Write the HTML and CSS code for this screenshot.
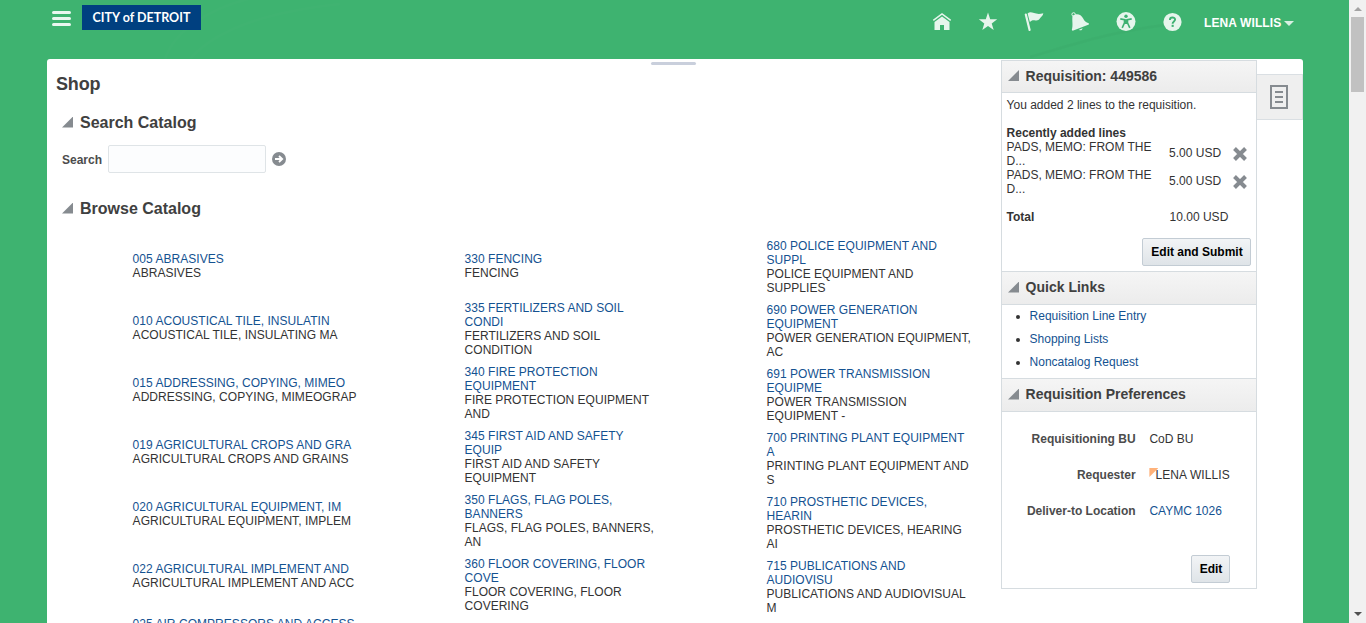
FILE: index.html
```html
<!DOCTYPE html>
<html lang="en">
<head>
<meta charset="utf-8">
<title>Shop</title>
<link rel="stylesheet" href="styles.css">
</head>
<body>
<div class="window">
  <div class="page">
    <svg class="swirl" width="1349" height="59" viewBox="0 0 1349 59" fill="none" stroke-width="3">
      <path d="M165 59C175 30 210 5 270-6M190 59C215 30 265 12 340 4" stroke="#fff" stroke-opacity=".012"/>
      <path d="M1030 57C1075 44 1110 32 1165 25" stroke="#000" stroke-opacity=".02"/>
    </svg>
    <header class="topbar">
      <svg class="burger" width="19" height="15" viewBox="0 0 19 15"><path d="M1.5 1.5h16M1.5 7.5h16M1.5 13.5h16" stroke="#e9f7ef" stroke-width="3" stroke-linecap="round"/></svg>
      <div class="logo">CITY of DETROIT</div>
      <nav class="tools">
        <svg width="20" height="20" viewBox="0 0 20 20"><path d="M1.300 10.300L10 3.900l8.700 6.400" fill="none" stroke="#e6f5ec" stroke-width="1.500"/><path d="M2.500 12L10 6.400l7.500 5.600V20h-5.500v-5h-4v5H2.500z" fill="#e6f5ec"/></svg>
        <svg width="20" height="20" viewBox="0 0 20 20"><path d="M10 2.500l2.200 6.700h7l-5.500 4.200 2 6.700-5.700-4-5.700 4 2-6.700-5.500-4.200h7z" fill="#e6f5ec"/></svg>
        <svg width="20" height="20" viewBox="0 0 20 20"><path d="M1.800 4.500L5.600 19.900" stroke="#e6f5ec" stroke-width="2.200" stroke-linecap="round"/><path d="M3.600 3.500c4-3.500 7 2.300 15.700-.3-.4 2.600-2 3.300-3.100 4.800-1.500 2.200-2.600 2.600-4.700 2.400-2.600-.3-4.200-.2-5.600 1.800z" fill="#e6f5ec"/></svg>
        <svg width="20" height="20" viewBox="0 0 20 20"><circle cx="3.600" cy="4.400" r="1.700" fill="none" stroke="#e6f5ec"/><path d="M2.500 6C6 3 11 4 13.200 8.500c1.200 2.600 2.600 4 5.600 4.800l.1 1.200L2.700 20.800l-.9-.8C3.300 15 1.800 11 2.500 6z" fill="#e6f5ec"/><path d="M9 19.800a2.200 2.200 0 0 0 3.600-1.500z" fill="#e6f5ec"/></svg>
        <svg width="20" height="20" viewBox="0 0 20 20"><circle cx="10" cy="11.600" r="9.500" fill="#e6f5ec"/><circle cx="10" cy="6.200" r="1.700" fill="#3eb172"/><path d="M4.300 8.900l4.200.8v3.100l-2.300 5M15.700 8.900l-4.200.8v3.100l2.300 5" fill="none" stroke="#3eb172" stroke-width="1.600"/><path d="M8 9.200h4v4.800H8z" fill="#3eb172"/></svg>
        <svg width="20" height="20" viewBox="0 0 20 20"><circle cx="10.500" cy="12" r="9.100" fill="#e6f5ec"/><path d="M7.900 9.900c0-3.200 5.200-3 5.200-.3 0 1.900-2.500 1.900-2.500 4.100" fill="none" stroke="#3eb172" stroke-width="1.900"/><path d="M9.600 14.800h2.100v2.100H9.600z" fill="#3eb172"/></svg>
      </nav>
      <div class="user">LENA WILLIS<span class="caret"></span></div>
    </header>

    <div class="panel">
      <div class="grip"></div>
      <main class="content">
        <h1>Shop</h1>
        <h2><i class="tri"></i>Search Catalog</h2>
        <div class="search">
          <label for="q">Search</label>
          <input id="q" type="text">
          <svg width="14" height="14" viewBox="0 0 14 14"><circle cx="7" cy="7" r="7" fill="#868b90"/><path d="M3 7h6M7 4l3.200 3L7 10" fill="none" stroke="#fff" stroke-width="1.800"/></svg>
        </div>
        <h2 class="browse"><i class="tri"></i>Browse Catalog</h2>
        <div class="catalog">
          <div class="col col-a">
            <p><a>005 ABRASIVES</a>ABRASIVES</p>
            <p><a>010 ACOUSTICAL TILE, INSULATIN</a>ACOUSTICAL TILE, INSULATING MA</p>
            <p><a>015 ADDRESSING, COPYING, MIMEO</a>ADDRESSING, COPYING, MIMEOGRAP</p>
            <p><a>019 AGRICULTURAL CROPS AND GRA</a>AGRICULTURAL CROPS AND GRAINS</p>
            <p><a>020 AGRICULTURAL EQUIPMENT, IM</a>AGRICULTURAL EQUIPMENT, IMPLEM</p>
            <p><a>022 AGRICULTURAL IMPLEMENT AND</a>AGRICULTURAL IMPLEMENT AND ACC</p>
            <p><a>025 AIR COMPRESSORS AND ACCESS</a></p>
          </div>
          <div class="col col-b">
            <p><a>330 FENCING</a>FENCING</p>
            <p><a>335 FERTILIZERS AND SOIL<br>CONDI</a>FERTILIZERS AND SOIL<br>CONDITION</p>
            <p><a>340 FIRE PROTECTION<br>EQUIPMENT</a>FIRE PROTECTION EQUIPMENT<br>AND</p>
            <p><a>345 FIRST AID AND SAFETY<br>EQUIP</a>FIRST AID AND SAFETY<br>EQUIPMENT</p>
            <p><a>350 FLAGS, FLAG POLES,<br>BANNERS</a>FLAGS, FLAG POLES, BANNERS,<br>AN</p>
            <p><a>360 FLOOR COVERING, FLOOR<br>COVE</a>FLOOR COVERING, FLOOR<br>COVERING</p>
          </div>
          <div class="col col-c">
            <p><a>680 POLICE EQUIPMENT AND<br>SUPPL</a>POLICE EQUIPMENT AND<br>SUPPLIES</p>
            <p><a>690 POWER GENERATION<br>EQUIPMENT</a>POWER GENERATION EQUIPMENT,<br>AC</p>
            <p><a>691 POWER TRANSMISSION<br>EQUIPME</a>POWER TRANSMISSION<br>EQUIPMENT -</p>
            <p><a>700 PRINTING PLANT EQUIPMENT<br>A</a>PRINTING PLANT EQUIPMENT AND<br>S</p>
            <p><a>710 PROSTHETIC DEVICES,<br>HEARIN</a>PROSTHETIC DEVICES, HEARING<br>AI</p>
            <p><a>715 PUBLICATIONS AND<br>AUDIOVISU</a>PUBLICATIONS AND AUDIOVISUAL<br>M</p>
          </div>
        </div>
      </main>

      <aside class="side">
        <h3><i class="tri"></i>Requisition: 449586</h3>
        <section class="req">
          <p class="note">You added 2 lines to the requisition.</p>
          <b class="recent">Recently added lines</b>
          <div class="line"><span class="item">PADS, MEMO: FROM THE<br>D...</span><span class="price">5.00 USD</span>
            <svg width="16" height="16" viewBox="0 0 16 16"><path d="M2.500 2.500l11 11M13.500 2.500l-11 11" stroke="#868b90" stroke-width="4"/></svg></div>
          <div class="line"><span class="item">PADS, MEMO: FROM THE<br>D...</span><span class="price">5.00 USD</span>
            <svg width="16" height="16" viewBox="0 0 16 16"><path d="M2.500 2.500l11 11M13.500 2.500l-11 11" stroke="#868b90" stroke-width="4"/></svg></div>
          <div class="total"><b>Total</b><span>10.00 USD</span></div>
          <button class="btn submit">Edit and Submit</button>
        </section>
        <h3><i class="tri"></i>Quick Links</h3>
        <ul class="links">
          <li><a>Requisition Line Entry</a></li>
          <li><a>Shopping Lists</a></li>
          <li><a>Noncatalog Request</a></li>
        </ul>
        <h3><i class="tri"></i>Requisition Preferences</h3>
        <section class="prefs">
          <dl>
            <dt>Requisitioning BU</dt><dd>CoD BU</dd>
            <dt>Requester</dt><dd class="flagged"><i class="corner"></i>LENA WILLIS</dd>
            <dt>Deliver-to Location</dt><dd><a>CAYMC 1026</a></dd>
          </dl>
          <button class="btn edit">Edit</button>
        </section>
      </aside>

      <div class="tab">
        <svg width="18" height="24" viewBox="0 0 18 24" fill="none" stroke="#868b90"><path d="M1 1h16v22H1z" stroke-width="2"/><path d="M5 7h8M5 12h8M5 17h8" stroke-width="1.800"/></svg>
      </div>
    </div>
  </div>
  <div class="scrollbar"><i class="up"></i><i class="thumb"></i><i class="down"></i></div>
</div>
</body>
</html>
```
FILE: styles.css
```css
* { box-sizing: border-box; }
body { margin: 0; overflow: hidden; font: 12px/14px "Liberation Sans", Arial, sans-serif; color: #333; }
h1, h2, h3, p, ul, dl, dd { margin: 0; padding: 0; }
a { color: #145291; }
.window { display: flex; height: 623px; }
.page { position: relative; flex: 1; display: flex; flex-direction: column; padding: 0 46px 0 47px; background: #3eb370; overflow: hidden; }
.swirl { position: absolute; left: 0; top: 0; }

/* Top bar */
.topbar { position: relative; flex: 0 0 59px; display: flex; align-items: flex-start; padding: 5px 9px 0 5px; }
.burger { margin: 6px 11px 0 0; }
.logo { width: 119px; height: 25px; background: #004080; color: #fff; font: 700 12.500px/25px Lato, sans-serif; text-align: center; white-space: nowrap; }
.tools { display: flex; gap: 26px; margin: 5px 22px 0 auto; }
.tools svg { overflow: visible; }
.user { display: flex; align-items: center; gap: 3px; padding-top: 11px; color: #fff; font-size: 12px; font-weight: 700; letter-spacing: .1px; white-space: nowrap; width: 90px; }
.caret { border: 5px solid transparent; border-top-color: #d8f0e2; border-bottom: 0; }

/* Main panel */
.panel { position: relative; flex: 1; display: flex; align-items: flex-start; min-height: 0; background: #fff; border-radius: 3px 3px 0 0; }
.grip { position: absolute; left: 604px; top: 3px; width: 45px; height: 3px; border-radius: 2px; background: #c9cfdc; }
.content { width: 954px; padding-left: 9px; }
h1 { padding-top: 14px; font-size: 18px; line-height: 22px; letter-spacing: -.15px; }
h2 { display: flex; align-items: center; margin-top: 18px; padding-left: 6px; font-size: 16px; line-height: 20px; }
h1, h2, h3 { color: #404040; white-space: nowrap; }
.tri { width: 11px; height: 11px; margin-right: 7px; background: #868b90; clip-path: polygon(100% 0, 100% 100%, 0 100%); }
h2 .tri { margin-bottom: 2px; }
.search { display: flex; align-items: center; height: 28px; margin-top: 12px; padding-left: 6px; }
.search label { width: 46px; padding-top: 2px; font-weight: 700; color: #4c4c4c; }
.search input { width: 158px; height: 28px; margin: 0 6px 0 0; border: 1px solid #dfe4e7; border-radius: 2px; background: #fcfdfe; }
.browse { margin-top: 26px; }
.catalog { display: flex; padding: 20px 0 0 76.600px; letter-spacing: .02px; }
.col { display: flex; flex-direction: column; white-space: nowrap; }
.col a { display: block; }
.col-a { width: 332px; padding-top: 13px; gap: 34px; letter-spacing: .04px; }
.col-a p:last-child { margin-top: -7px; }
.col-b { width: 302px; padding-top: 13px; gap: 8px; }
.col-b p:first-child { margin-bottom: 13px; }
.col-c { gap: 8px; }

/* Requisition column */
.side { width: 256px; margin-top: 1px; border: 1px solid #d6dce0; border-top: 0; white-space: nowrap; }
h3 { display: flex; align-items: center; height: 34px; padding: 0 0 2px 6px; border: solid #d6dce0; border-width: 1px 0; background: linear-gradient(#f5f5f5, #ececec); font-size: 14px; line-height: 18px; }
h3 .tri { margin-right: 6.600px; }
.side h3:first-child { height: 33px; }
.req { height: 178px; padding: 5px 5px 0 4.600px; display: flex; flex-direction: column; }
.recent { margin-top: 14px; }
.line { display: flex; align-items: center; height: 28px; }
.item { width: 162.500px; }
.price { width: 62.500px; padding-bottom: 2px; }
.total { display: flex; margin-top: 14px; }
.total b { width: 163px; }
.btn { border: 1px solid #c3ccd4; border-radius: 2px; background: linear-gradient(#f2f4f6, #dfe4e8); color: #000; font: 700 12px/26px "Liberation Sans", Arial, sans-serif; height: 28px; padding: 0; }
.submit { width: 109px; margin-top: 14px; padding-left: 1px; align-self: flex-end; }
.links { height: 73px; padding: 4px 0 0 27.600px; display: flex; flex-direction: column; gap: 9px; }
.prefs { height: 176px; padding: 20px 26px 0 0; display: flex; flex-direction: column; }
dl { display: grid; grid-template-columns: 133.600px 1fr; gap: 22px 13.800px; }
dt { text-align: right; font-weight: 700; color: #4c4c4c; }
.flagged { display: flex; letter-spacing: .1px; }
.corner { width: 9px; height: 9px; margin: 0 -3px 0 0; background: #ffb27a; clip-path: polygon(0 0, 100% 0, 0 100%); }
.edit { width: 39px; margin-top: 37px; padding-left: 1px; align-self: flex-end; }
.tab { display: flex; align-items: center; justify-content: center; width: 46px; height: 46px; margin-top: 15px; padding-right: 2px; border: 1px solid #dadfe3; border-left: 0; background: #efefef; }

/* Scrollbar */
.scrollbar { width: 17px; background: #f1f1f1; display: flex; flex-direction: column; align-items: center; }
.scrollbar .up { margin: 7px 0 6px; border: 4px solid transparent; border-top: 0; border-bottom-color: #a3a3a3; }
.scrollbar .thumb { width: 13px; height: 75px; background: #c1c1c1; }
.scrollbar .down { margin: auto 0 7px; border: 4px solid transparent; border-bottom: 0; border-top-color: #505050; }
```
